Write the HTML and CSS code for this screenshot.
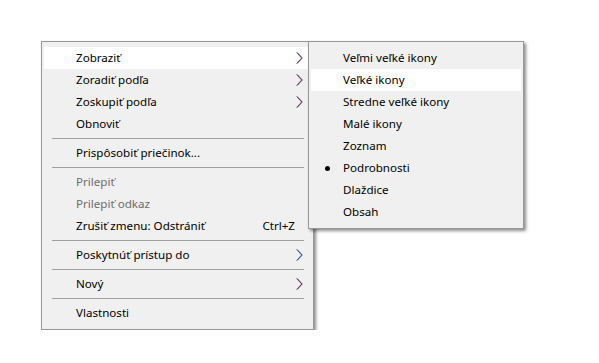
FILE: index.html
```html
<!DOCTYPE html>
<html>
<head>
<meta charset="utf-8">
<link rel="stylesheet" href="styles.css">
</head>
<body>
<div class="stage">
  <div class="menu main">
    <div class="item hot"><span class="label">Zobraziť</span><svg class="chev" width="9" height="14" viewBox="0 0 9 14"><polyline class="c1" points="1.6,1.5 6.6,7 1.6,12.5"/><polyline class="c2" points="2.2,1.5 7.2,7 2.2,12.5"/></svg></div>
    <div class="item"><span class="label">Zoradiť podľa</span><svg class="chev" width="9" height="14" viewBox="0 0 9 14"><polyline class="c1" points="1.6,1.5 6.6,7 1.6,12.5"/><polyline class="c2" points="2.2,1.5 7.2,7 2.2,12.5"/></svg></div>
    <div class="item"><span class="label">Zoskupiť podľa</span><svg class="chev" width="9" height="14" viewBox="0 0 9 14"><polyline class="c1" points="1.6,1.5 6.6,7 1.6,12.5"/><polyline class="c2" points="2.2,1.5 7.2,7 2.2,12.5"/></svg></div>
    <div class="item"><span class="label">Obnoviť</span></div>
    <div class="sep"></div>
    <div class="item"><span class="label">Prispôsobiť priečinok...</span></div>
    <div class="sep"></div>
    <div class="item disabled"><span class="label">Prilepiť</span></div>
    <div class="item disabled"><span class="label">Prilepiť odkaz</span></div>
    <div class="item"><span class="label">Zrušiť zmenu: Odstrániť</span><span class="key">Ctrl+Z</span></div>
    <div class="sep"></div>
    <div class="item"><span class="label">Poskytnúť prístup do</span><svg class="chev blue" width="9" height="14" viewBox="0 0 9 14"><polyline class="c1" points="1.6,1.5 6.6,7 1.6,12.5"/><polyline class="c2" points="2.2,1.5 7.2,7 2.2,12.5"/></svg></div>
    <div class="sep"></div>
    <div class="item"><span class="label">Nový</span><svg class="chev" width="9" height="14" viewBox="0 0 9 14"><polyline class="c1" points="1.6,1.5 6.6,7 1.6,12.5"/><polyline class="c2" points="2.2,1.5 7.2,7 2.2,12.5"/></svg></div>
    <div class="sep"></div>
    <div class="item"><span class="label">Vlastnosti</span></div>
  </div>
  <div class="menu sub">
    <div class="item"><span class="label">Veľmi veľké ikony</span></div>
    <div class="item hot"><span class="label">Veľké ikony</span></div>
    <div class="item"><span class="label">Stredne veľké ikony</span></div>
    <div class="item"><span class="label">Malé ikony</span></div>
    <div class="item"><span class="label">Zoznam</span></div>
    <div class="item checked"><span class="bullet"></span><span class="label">Podrobnosti</span></div>
    <div class="item"><span class="label">Dlaždice</span></div>
    <div class="item"><span class="label">Obsah</span></div>
  </div>
</div>
</body>
</html>
```

FILE: styles.css
```css
html, body {
  margin: 0;
  padding: 0;
  background: #ffffff;
}

body {
  font-family: "Noto Sans", "Open Sans", sans-serif;
  font-size: 11.6px;
  color: #000;
}

.stage {
  position: relative;
  padding: 41px 0 0 41px;
}

.menu {
  box-sizing: border-box;
  background: #f0f0f0;
  border: 1px solid #979797;
  padding: 5px 2px;
  box-shadow: 2px 2px 3px rgba(0, 0, 0, 0.45);
  display: flex;
  flex-direction: column;
}

.main {
  width: 273px;
}

.sub {
  position: absolute;
  left: 308px;
  top: 41px;
  width: 216px;
}

.item {
  position: relative;
  height: 22px;
  display: flex;
  align-items: center;
  padding-left: 32px;
  padding-right: 16px;
  white-space: nowrap;
}

.item.hot {
  background: #ffffff;
}

.item.disabled {
  color: #6d6d6d;
}

.label {
  flex: 1;
  line-height: 22px;
}

.key {
  line-height: 22px;
}

.chev {
  position: absolute;
  right: 7px;
  top: 4px;
}

.chev polyline {
  fill: none;
  stroke-width: 1;
}

.chev .c1 {
  stroke: #4a86e0;
}

.chev .c2 {
  stroke: #8a1c20;
}

.chev.blue .c2 {
  stroke: #2a4a8a;
}

.sep {
  height: 7px;
  display: flex;
  align-items: center;
  padding: 0 7px 0 8px;
}

.sep::before {
  content: "";
  flex: 1;
  height: 1px;
  background: #a0a0a0;
}

.bullet {
  position: absolute;
  left: 14px;
  top: 9px;
  width: 5px;
  height: 5px;
  border-radius: 50%;
  background: #000;
}
```
